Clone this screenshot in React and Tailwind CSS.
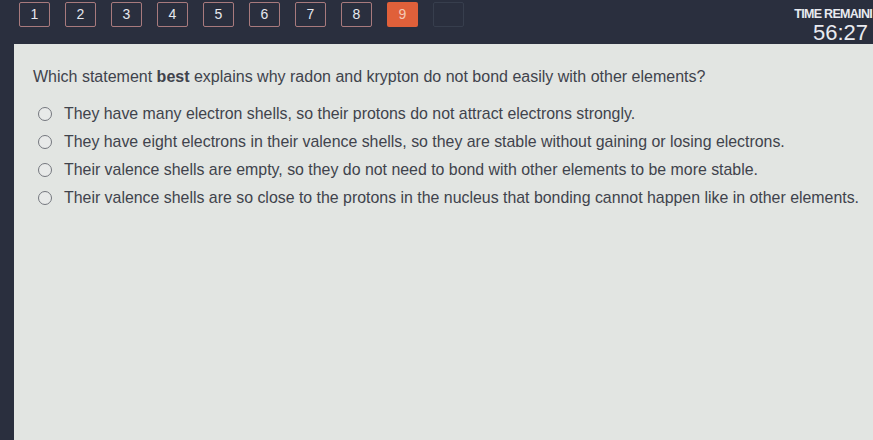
import React from 'react';

const options = [
  'They have many electron shells, so their protons do not attract electrons strongly.',
  'They have eight electrons in their valence shells, so they are stable without gaining or losing electrons.',
  'Their valence shells are empty, so they do not need to bond with other elements to be more stable.',
  'Their valence shells are so close to the protons in the nucleus that bonding cannot happen like in other elements.',
];

const QuestionButton = ({ n, active, faint }) => {
  if (active) {
    return (
      <div className="w-[31px] h-[25px] rounded-[2px] bg-[#e0603a] text-[#f4c9b5] text-[14px] flex items-center justify-center">
        {n}
      </div>
    );
  }
  if (faint) {
    return <div className="w-[31px] h-[25px] rounded-[2px] border border-[#373e4d]" />;
  }
  return (
    <div className="w-[31px] h-[25px] rounded-[2px] border border-[#a87a7d] text-[#e6e8ee] text-[14px] flex items-center justify-center">
      {n}
    </div>
  );
};

export default function App() {
  return (
    <div
      className="w-[873px] h-[440px] overflow-hidden bg-[#2a2f3e] flex flex-col"
      style={{ fontFamily: '"Liberation Sans", Arial, sans-serif' }}
    >
      {/* top bar */}
      <div className="h-[44px] flex items-start pl-[19px] pt-[1px]">
        <div className="flex gap-[15px] pt-[1px]">
          {[1, 2, 3, 4, 5, 6, 7, 8].map((n) => (
            <QuestionButton key={n} n={n} />
          ))}
          <QuestionButton n={9} active />
          <QuestionButton n={10} faint />
        </div>
        <div className="ml-auto flex flex-col items-end text-[#e8eaf0] pt-[6px] pr-[1px]">
          <div className="text-[12.5px] font-bold tracking-[-0.7px] leading-[14px] whitespace-nowrap">TIME REMAINI</div>
          <div className="text-[22px] leading-[24px] mr-[4px]">56:27</div>
        </div>
      </div>

      {/* question panel */}
      <div className="flex-1 ml-[14px] bg-[#e2e5e2] pl-[19px] pt-[23px] text-[#40434c]">
        <p className="text-[16px] leading-[20px]">
          Which statement <span className="font-bold">best</span> explains why radon and krypton do not bond easily with other elements?
        </p>
        <div className="mt-[17px] flex flex-col gap-[8px] pl-[5px]">
          {options.map((o) => (
            <label key={o} className="flex items-center gap-[12px] h-[20px]">
              <span className="w-[14px] h-[14px] rounded-full border-[1.5px] border-[#74777e] bg-[#e8eae9]" />
              <span className="text-[15.9px] leading-[20px] whitespace-nowrap">{o}</span>
            </label>
          ))}
        </div>
      </div>
    </div>
  );
}
